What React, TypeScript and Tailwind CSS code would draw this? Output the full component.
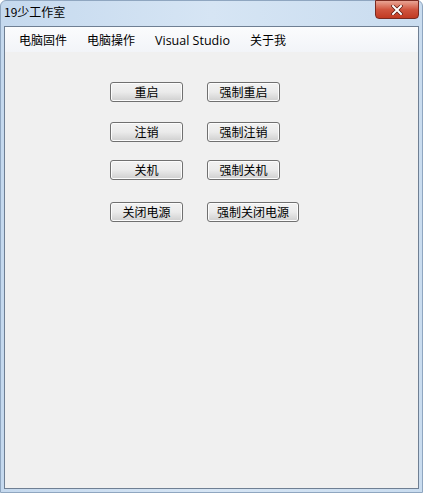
const menus = ["电脑固件", "电脑操作", "Visual Studio", "关于我"];

const rows = [
  { a: "重启", b: "强制重启", mt: "mt-[30px]", wb: "w-[73px]" },
  { a: "注销", b: "强制注销", mt: "mt-[20px]", wb: "w-[73px]" },
  { a: "关机", b: "强制关机", mt: "mt-[18px]", wb: "w-[73px]" },
  { a: "关闭电源", b: "强制关闭电源", mt: "mt-[22px]", wb: "w-[92px]" },
];

function WinButton({ label, w }: { label: string; w: string }) {
  return (
    <button
      className={`${w} h-[20px] rounded-[3px] border border-[#707070] bg-gradient-to-b from-[#f2f2f2] via-[#ebebeb] to-[#cfcfcf] text-[12px] leading-none text-black shadow-[inset_0_0_0_1px_#fcfcfc]`}
    >
      {label}
    </button>
  );
}

export default function App() {
  return (
    <div
      className="w-[430px] h-[498px] bg-white overflow-hidden"
      style={{ fontFamily: '"Noto Sans CJK SC", "Open Sans", sans-serif' }}
    >
      {/* window frame */}
      <div className="w-[423px] h-[493px] flex flex-col bg-gradient-to-r from-[#c5d9ee] via-[#d6e5f4] to-[#c9dcef] rounded-t-[6px] border border-[#8fa6c0]">
        {/* title bar */}
        <div className="h-[25px] flex items-start justify-between">
          <span className="pl-[3px] pt-[3px] text-[12px] leading-[16px] text-black">19少工作室</span>
          <div className="mr-[3px] mt-[-1px] w-[44px] h-[19px] rounded-b-[4px] border border-[#7a2a20] bg-gradient-to-b from-[#e8a494] via-[#d0553f] to-[#c13a22] flex items-center justify-center">
            <svg width="12" height="10" viewBox="0 0 12 10">
              <path d="M2 1 L10 9 M10 1 L2 9" stroke="#5a1a10" strokeWidth="3.4" strokeLinecap="square" />
              <path d="M2 1 L10 9 M10 1 L2 9" stroke="#ffffff" strokeWidth="2" strokeLinecap="square" />
            </svg>
          </div>
        </div>
        {/* client */}
        <div className="flex-1 mx-[3px] mb-[3px] border border-[#6f7f93] bg-[#f0f0f0] flex flex-col">
          <div className="h-[25px] bg-gradient-to-b from-[#fbfcfd] to-[#f2f4f8] flex items-baseline pt-[5px] pl-[14px] gap-[20px] text-[12px] leading-[16px] text-black">
            {menus.map((m) => (
              <span
                key={m}
                style={m === "Visual Studio" ? { fontFamily: '"Open Sans", sans-serif', fontSize: "12.5px" } : undefined}
              >
                {m}
              </span>
            ))}
          </div>
          <div className="flex flex-col pl-[105px]">
            {rows.map((r) => (
              <div key={r.a} className={`${r.mt} flex gap-[24px]`}>
                <WinButton label={r.a} w="w-[73px]" />
                <WinButton label={r.b} w={r.wb} />
              </div>
            ))}
          </div>
        </div>
      </div>
    </div>
  );
}
